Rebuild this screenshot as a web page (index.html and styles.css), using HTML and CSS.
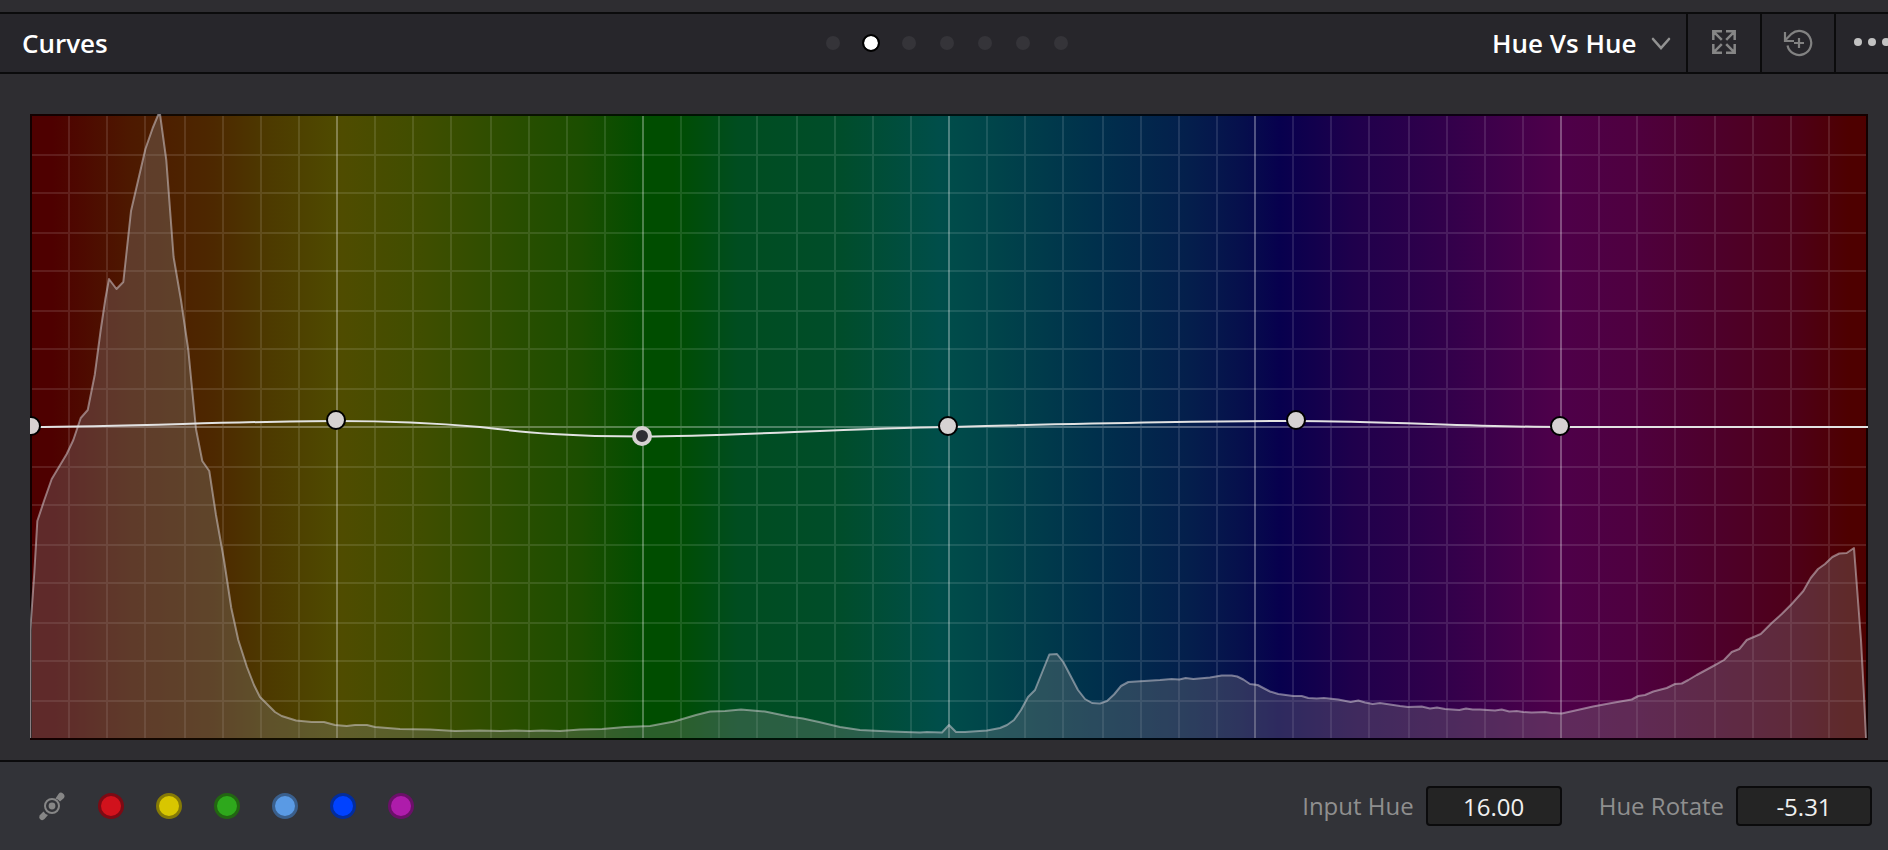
FILE: index.html
```html
<!DOCTYPE html>
<html lang="en">
<head>
<meta charset="utf-8">
<title>Curves</title>
<meta name="viewport" content="width=device-width, initial-scale=1">
<link rel="stylesheet" href="styles.css">
</head>
<body>
<header class="toolbar">
  <h1 class="title">Curves</h1>
  <div class="pager" role="radiogroup" aria-label="Curve pages">
    <input class="page-dot" type="radio" name="page" aria-label="Custom">
    <input class="page-dot" type="radio" name="page" aria-label="Hue Vs Hue" checked>
    <input class="page-dot" type="radio" name="page" aria-label="Hue Vs Sat">
    <input class="page-dot" type="radio" name="page" aria-label="Hue Vs Lum">
    <input class="page-dot" type="radio" name="page" aria-label="Lum Vs Sat">
    <input class="page-dot" type="radio" name="page" aria-label="Sat Vs Sat">
    <input class="page-dot" type="radio" name="page" aria-label="Sat Vs Lum">
  </div>
  <div class="tools">
    <div class="mode">
      <select class="mode-select" aria-label="Curve type">
        <option>Hue Vs Hue</option>
      </select>
      <svg class="chevron" width="20" height="16" viewBox="0 0 20 16" aria-hidden="true">
        <path d="M2 4l8 9 8-9" fill="none" stroke="#929292" stroke-width="2.600" stroke-linecap="round"/>
      </svg>
    </div>
    <button class="tool" type="button" aria-label="Expand">
      <svg width="28" height="28" viewBox="0 0 28 28" fill="none" stroke="#868686" stroke-width="2.500" aria-hidden="true">
        <path d="M12 2.300H3.300V11M3.300 2.300l8.500 8.500M16 2.300h8.700V11M24.700 2.300l-8.500 8.500M12 23.700H3.300V15M3.300 23.700l8.500-8.500M16 23.700h8.700V15M24.700 23.700l-8.500-8.500"/>
      </svg>
    </button>
    <button class="tool" type="button" aria-label="Reset">
      <svg width="30" height="30" viewBox="0 0 30 30" fill="none" stroke="#828282" stroke-width="2.200" aria-hidden="true">
        <path d="M4.500 17.500A12 12 0 1 0 8.500 5.800L2.500 12M2 4v9h9M16 10v10M11 15h10"/>
      </svg>
    </button>
    <button class="tool tool-more" type="button" aria-label="More options">
      <svg width="40" height="12" viewBox="0 0 40 12" fill="#c2c2c2" aria-hidden="true">
        <circle cx="6" cy="5" r="4"/><circle cx="20" cy="5" r="4"/><circle cx="34" cy="5" r="4"/>
      </svg>
    </button>
  </div>
</header>

<main class="stage">
  <div class="plot">
    <svg class="chart" viewBox="30 114 1838 626" preserveAspectRatio="none" role="img" aria-label="Hue curve with histogram">
      <defs>
        <pattern id="grid" x="33" y="117" width="306" height="78" patternUnits="userSpaceOnUse">
          <path fill="#fff" fill-opacity=".11" d="M35 0h2v78h-2zM73 0h2v78h-2zM111 0h2v78h-2zM151 0h2v78h-2zM189 0h2v78h-2zM227 0h2v78h-2zM265 0h2v78h-2zM0 37h306v2H0zM0 75h306v2H0z"/>
        </pattern>
      </defs>
      <rect x="32" y="116" width="1834" height="622" fill="url(#grid)"/>
      <path class="major" d="M337 116V738M643 116V738M949 116V738M1255 116V738M1561 116V738"/>
      <path class="axis" d="M32 427H1866"/>
      <rect class="frame" x="31" y="115" width="1836" height="624"/>
      <path class="histogram" d="M30 738L30.300 630 31.700 610 34.300 573 37.300 521 44.300 500 51.700 479 66.700 454 73.300 440 80.700 418 87.700 410 94.700 375 100.700 330 105.500 298 109 279 116.500 289 123.300 282 131 211 145.400 149 152.700 128 158.500 114H160L166.300 160 173.600 257 181 300 188.300 350 196 429 202.300 461 209.300 471 216 515 224 560 231.300 608 238.300 640 247 667 254 685 260 697 275 712 281.700 716 296 720.500 311.700 722 324 722 335 725 346.700 726 355 725 367 725 375 727 400 729 430 729.500 455 731 480 730.500 500 731 515 730.500 530 731 542 730.500 560 731 580 729.500 602 729 625 727 650 726 674 721.500 696 715 710 711.500 725 711 741 709.500 765 711.500 789 716.500 803 718.500 819 722 840 727 860 730 891 731.500 920 732.500 927 732 942 732.500 949 725 956 732 965 732 987 730.500 1000 728 1007 725 1014 720 1021 710 1028 697 1035 690 1049.300 654.500 1057 654 1063.300 662 1078 690 1085 699 1092 703 1100 703.500 1107 701 1114 694.500 1121 686 1128.300 682 1160 680 1171.700 679 1179.300 679.500 1185.700 678 1193.300 679 1210 677.500 1221.700 675.500 1231.700 675.500 1237.300 676.500 1243.300 679.500 1250 684 1257.700 685 1263.300 688 1270 691.500 1278.300 694 1293.300 696 1301.700 696 1308.300 698 1316.700 698.500 1324 698 1338.300 699.500 1350.700 702 1358.300 700.500 1365 702.500 1372.700 704 1380 703 1400 706 1408 707 1421.700 706.500 1430 708.500 1437 707.500 1445 709 1459.300 710 1466 708.500 1472.700 709.500 1480 709.500 1495 710.500 1501.700 709.500 1509.300 711.500 1516.700 711 1523.300 712 1531.700 712.500 1545 712 1551.700 713 1561.700 713.500 1573 711 1593 706.500 1611.700 703 1631.700 699.500 1638.300 696 1645 695 1653.300 691.500 1666.700 688 1675 684 1681.700 683.500 1688.300 680 1696.700 675 1713.300 666 1724 660 1731.700 652 1739.300 649 1746.700 640 1760.700 634 1771.700 623 1781.700 614 1791.700 604 1803.300 591 1810.700 578 1818 569 1825 564 1832.300 557 1839.300 553.500 1846.700 553 1854 548 1861 640 1863.700 690 1866 738"/>
      <path class="curve" d="M30 427C132 427 234 421 337 421C390 421 435 423 480 427C530 433 570 436.500 643 436.500C730 436.500 847 428 949 427C1065 424 1180 421 1296 421C1384 421 1473 427 1561 427H1868"/>
    </svg>
    <button class="handle" type="button" aria-label="Red point" style="left:0.05%;top:49.84%"></button>
    <button class="handle" type="button" aria-label="Yellow point" style="left:16.65%;top:48.88%"></button>
    <button class="handle handle-active" type="button" aria-label="Green point" style="left:33.3%;top:51.44%"></button>
    <button class="handle" type="button" aria-label="Cyan point" style="left:49.95%;top:49.84%"></button>
    <button class="handle" type="button" aria-label="Blue point" style="left:68.88%;top:48.88%"></button>
    <button class="handle" type="button" aria-label="Magenta point" style="left:83.24%;top:49.84%"></button>
  </div>
</main>

<footer class="footer">
  <div class="swatches">
    <button class="bezier" type="button" aria-label="Bezier handles">
      <svg width="30" height="32" viewBox="0 0 30 32" aria-hidden="true">
        <g fill="#868686">
          <path d="M19.500 8.500L22.500 4Q24.500 1.500 27 3.500T28 8L24 11.500Q22.500 9.500 19.500 8.500Z"/>
          <path d="M12 25L8.500 29Q6.500 31 4.500 29.500T3.500 25.500L7.500 21.500Q9 24 12 25Z"/>
          <circle cx="16" cy="16" r="3.400"/>
        </g>
        <circle cx="16" cy="16" r="7" fill="none" stroke="#868686" stroke-width="2"/>
      </svg>
    </button>
    <button class="swatch red" type="button" aria-label="Red"></button>
    <button class="swatch yellow" type="button" aria-label="Yellow"></button>
    <button class="swatch green" type="button" aria-label="Green"></button>
    <button class="swatch cyan" type="button" aria-label="Cyan"></button>
    <button class="swatch blue" type="button" aria-label="Blue"></button>
    <button class="swatch magenta" type="button" aria-label="Magenta"></button>
  </div>
  <div class="fields">
    <div class="field">
      <label class="field-label" for="input-hue">Input Hue</label>
      <input class="field-value" id="input-hue" type="text" value="16.00">
    </div>
    <div class="field">
      <label class="field-label" for="hue-rotate">Hue Rotate</label>
      <input class="field-value" id="hue-rotate" type="text" value="-5.31">
    </div>
  </div>
</footer>
</body>
</html>
```
FILE: styles.css
```css
* {
  box-sizing: border-box;
}

body {
  margin: 0;
  min-height: 100vh;
  display: flex;
  flex-direction: column;
  overflow-x: hidden;
  background: #2e2d31;
  color: #fff;
  font-family: "Open Sans", "Noto Sans", sans-serif;
  font-size: 24px;
}

button,
input,
select {
  margin: 0;
  padding: 0;
  border: 0;
  font: inherit;
  color: inherit;
  background: none;
}

svg {
  display: block;
}

/* Toolbar */
.toolbar {
  display: grid;
  grid-template-columns: 1fr auto 1fr;
  align-items: stretch;
  margin-top: 12px;
  padding-left: 6px;
  height: 62px;
  border-top: 2px solid #0b0b0c;
  border-bottom: 2px solid #0b0b0c;
  background: #27262b;
}

.title {
  margin: 0;
  padding-left: 16px;
  align-self: center;
  font-size: 26px;
  line-height: 36px;
  font-weight: 600;
}

.pager {
  display: flex;
  align-items: center;
  gap: 20px;
}

.page-dot {
  appearance: none;
  width: 18px;
  height: 18px;
  border: 2px solid transparent;
  border-radius: 50%;
  background: #353439;
  background-clip: padding-box;
}

.page-dot:checked {
  border-color: #000;
  background-color: #fff;
}

.tools {
  display: flex;
  justify-content: flex-end;
}

.mode {
  display: grid;
  align-items: center;
}

.mode-select {
  grid-area: 1 / 1;
  appearance: none;
  padding-right: 49px;
  font-size: 26px;
  line-height: 36px;
  font-weight: 600;
}

.chevron {
  grid-area: 1 / 1;
  justify-self: end;
  margin-right: 15px;
  pointer-events: none;
}

.tool {
  display: grid;
  place-items: center;
  width: 74px;
  border-left: 2px solid #0b0b0c;
}

.tool-more {
  width: 54px;
  overflow: hidden;
  justify-items: start;
  padding-left: 16px;
}

/* Curve plot */
.stage {
  flex: 1;
  display: flex;
  padding: 40px 20px 20px 30px;
}

.plot {
  position: relative;
  flex: 1;
  overflow: hidden;
  background: linear-gradient(
    to right,
    #4e0000 0%,
    #4e0000 1.2%,
    #4d1900 5.5%,
    #4d2800 10%,
    #4d3a00 13%,
    #4f4c00 17%,
    #3f4e00 21.5%,
    #2b4e00 26%,
    #1b4e00 30%,
    #004d00 33.6%,
    #004d00 35%,
    #004d20 38.5%,
    #004d2a 44%,
    #004e4a 49.5%,
    #00444a 52.5%,
    #00304c 58%,
    #041f4c 63%,
    #060f4c 66%,
    #07004e 68%,
    #1f004c 72%,
    #32004b 77%,
    #4e004a 83%,
    #4f0040 87%,
    #4e002c 91.5%,
    #4e0018 96%,
    #4e0000 99%,
    #4e0000 100%
  );
}

.chart {
  position: absolute;
  inset: 0;
  width: 100%;
  height: 100%;
}

.major {
  stroke: #fff;
  stroke-opacity: .3;
  stroke-width: 2;
}

.axis {
  stroke: #fff;
  stroke-opacity: .22;
  stroke-width: 2;
}

.frame {
  fill: none;
  stroke: #000;
  stroke-opacity: .75;
  stroke-width: 2;
}

.histogram {
  fill: #888688;
  fill-opacity: .31;
  stroke: #dcd6dc;
  stroke-opacity: .5;
  stroke-width: 2;
  stroke-linejoin: round;
}

.curve {
  fill: none;
  stroke: #e2e2e2;
  stroke-width: 2;
}

.handle {
  position: absolute;
  width: 20px;
  height: 20px;
  border: 2px solid #000;
  border-radius: 50%;
  background: #d6d2d2;
  transform: translate(-50%, -50%);
}

.handle-active {
  border: 4px solid #d6d2d2;
  background: #2f2e33;
}

/* Footer */
.footer {
  display: flex;
  justify-content: space-between;
  align-items: center;
  height: 90px;
  padding: 0 16px 0 36px;
  border-top: 2px solid #0b0b0c;
  background: #323338;
}

.swatches {
  display: flex;
  align-items: center;
  gap: 32px;
}

.swatch {
  width: 26px;
  height: 26px;
  border: 3px solid;
  border-radius: 50%;
}

.red { background: #d1121c; border-color: #7d0a14; }
.yellow { background: #d8c600; border-color: #857a06; }
.green { background: #2ea81c; border-color: #226612; }
.cyan { background: #5a9ae4; border-color: #3a5f8c; }
.blue { background: #0042ff; border-color: #032d9c; }
.magenta { background: #ae1cab; border-color: #6b1069; }

.fields {
  display: flex;
  gap: 37px;
}

.field {
  display: flex;
  align-items: center;
  gap: 12px;
}

.field-label {
  color: #8f8f8f;
  line-height: 34px;
}

.field-value {
  width: 136px;
  height: 40px;
  border: 2px solid #0b0b0c;
  border-radius: 4px;
  background: #242424;
  color: #f0f0f0;
  text-align: center;
}
```
